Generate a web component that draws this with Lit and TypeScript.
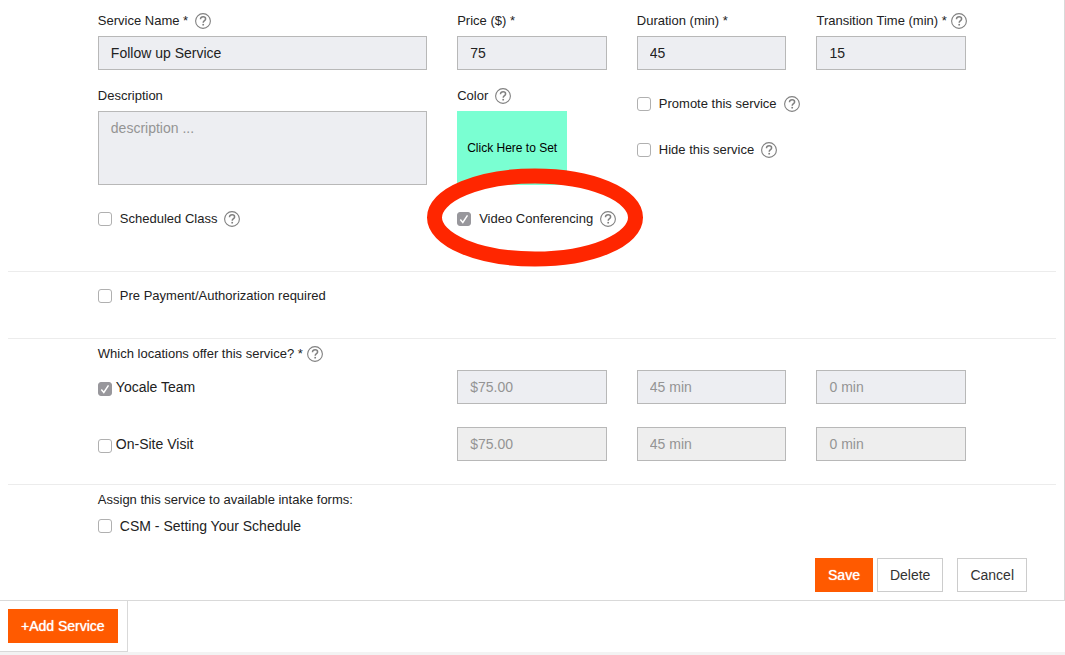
import { LitElement, html, css } from "lit";
import { customElement, property } from "lit/decorators.js";

@customElement("help-icon")
class HelpIcon extends LitElement {
  @property() topic = "";

  static styles = css`
    :host {
      display: inline-flex;
      flex: none;
    }
    .help {
      display: flex;
      padding: 0;
      border: 0;
      background: none;
      cursor: pointer;
    }
    .glyph {
      display: block;
      width: 16px;
      height: 16px;
    }
  `;

  render() {
    return html`<button class="help" type="button" aria-label="Help: ${this.topic}">
      <svg class="glyph" viewBox="0 0 16 16" fill="none" stroke="#808080" aria-hidden="true">
        <circle cx="8" cy="8" r="7.4" stroke-width="1.1" />
        <path d="M5.5 6.3C5.5 4.6 6.5 3.8 8.1 3.8C9.6 3.8 10.6 4.6 10.6 5.9C10.6 7.7 8.2 7.6 8.2 9.8" stroke-width="1.5" />
        <path d="M8.2 10.9V12.5" stroke-width="1.7" />
      </svg>
    </button>`;
  }
}

@customElement("app-root")
class AppRoot extends LitElement {
  static styles = css`
    :host {
      display: block;
      min-height: 100vh;
      background: #f3f3f3;
      color: #222;
      font-family: "Liberation Sans", Arial, sans-serif;
      font-size: 13px;
      line-height: 20px;
    }
    * {
      box-sizing: border-box;
    }
    .page {
      background: #fff;
    }
    .panel {
      padding: 11px 8px 8px;
      border-right: 1px solid #d9d9d9;
      border-bottom: 1px solid #d9d9d9;
    }
    .row {
      display: grid;
      grid-template-columns: repeat(12, minmax(0, 1fr));
      column-gap: 30px;
    }
    .first {
      grid-column: 2 / span 4;
    }
    .wide {
      grid-column: 2 / span 10;
    }
    .second {
      grid-column: 6 / span 2;
    }
    .third {
      grid-column: 8 / span 2;
    }
    .fourth {
      grid-column: 10 / span 2;
    }
    .details {
      margin-top: 16px;
    }
    .options {
      margin-top: 24px;
      padding-bottom: 42px;
    }
    .section {
      border-top: 1px solid #ececec;
    }
    .payment {
      padding: 14px 0 32px;
    }
    .locations {
      row-gap: 23px;
      padding: 5px 0 23px;
    }
    .question {
      margin-bottom: -17px;
    }
    .forms {
      row-gap: 6px;
      padding: 5px 0 22px;
    }
    .caption {
      display: flex;
      align-items: center;
      gap: 7px;
      margin-bottom: 5px;
      white-space: nowrap;
    }
    .question .caption {
      gap: 4px;
      margin-bottom: 0;
    }
    .fourth .caption {
      gap: 4px;
    }
    .field {
      display: block;
      width: 100%;
      height: 34px;
      margin: 0;
      padding: 6px 12px;
      border: 1px solid #b8b8b8;
      border-radius: 0;
      background: #edeef2;
      color: #222;
      font: inherit;
      font-size: 14px;
    }
    .field::placeholder {
      color: #949494;
      opacity: 1;
    }
    .field:disabled {
      background: #eee;
    }
    .area {
      height: 74px;
      resize: none;
    }
    .swatch {
      display: block;
      height: 74px;
      padding: 0 10px;
      border: 0;
      background: #7affd2;
      color: #000;
      font: inherit;
      font-size: 12px;
      white-space: nowrap;
    }
    .check {
      display: flex;
      align-items: center;
      gap: 7px;
      white-space: nowrap;
    }
    .toggle {
      display: flex;
      align-items: center;
      gap: 8px;
    }
    .large {
      font-size: 14px;
    }
    .place {
      gap: 4px;
      height: 34px;
    }
    .box {
      flex: none;
      width: 14px;
      height: 14px;
      margin: 0;
      appearance: none;
      border: 1px solid #b0b0b0;
      border-radius: 3px;
      background: #fff;
    }
    .place .box {
      margin-top: 4px;
    }
    .box:checked {
      border-color: #98979c;
      background: #98979c
        url("data:image/svg+xml,%3Csvg xmlns='http://www.w3.org/2000/svg' viewBox='0 0 12 12'%3E%3Cpath d='M2.3 6.6L4.8 9.4L9.5 2.3' fill='none' stroke='white' stroke-width='1.5'/%3E%3C/svg%3E")
        center / 12px 12px no-repeat;
    }
    .visibility {
      display: flex;
      flex-direction: column;
      gap: 26px;
      padding-top: 8px;
    }
    .marked {
      position: relative;
    }
    .ring {
      position: absolute;
      top: -41px;
      left: -30px;
      width: 216px;
      height: 99px;
      pointer-events: none;
    }
    .actions {
      display: flex;
      justify-content: flex-end;
      padding-right: 29px;
    }
    .button {
      height: 34px;
      padding: 0 12px;
      border: 1px solid #ccc;
      background: #fff;
      color: #333;
      font: inherit;
      font-size: 14px;
      white-space: nowrap;
    }
    .primary {
      border-color: #ff5a00;
      background: #ff5a00;
      color: #fff;
      text-shadow: 0 0 1px #fff;
    }
    .delete {
      margin: 0 14px 0 4px;
    }
    .add {
      display: flex;
      width: fit-content;
      padding: 8px 9px 8px 8px;
      border-right: 1px solid #d9d9d9;
      border-bottom: 1px solid #d9d9d9;
    }
  `;

  private check(id: string, text: string, help = false, checked = false) {
    return html`<div class="check">
      <label class="toggle" for=${id}>
        <input class="box" type="checkbox" id=${id} ?checked=${checked} />${text}
      </label>
      ${help ? html`<help-icon topic=${text}></help-icon>` : ""}
    </div>`;
  }

  private input(column: string, id: string, text: string, value: string, help = false) {
    return html`<div class=${column}>
      <div class="caption">
        <label for=${id}>${text} *</label>
        ${help ? html`<help-icon topic=${text}></help-icon>` : ""}
      </div>
      <input class="field" id=${id} .value=${value} />
    </div>`;
  }

  private location(id: string, name: string, offered: boolean) {
    const fields = [
      ["second", "price", "$75.00"],
      ["third", "duration", "45 min"],
      ["fourth", "transition time", "0 min"],
    ];
    return html`
      <div class="first">
        <label class="toggle place large" for=${id}>
          <input class="box" type="checkbox" id=${id} ?checked=${offered} />${name}
        </label>
      </div>
      ${fields.map(
        ([column, label, hint]) => html`<div class=${column}>
          <input class="field" aria-label="${name} ${label}" placeholder=${hint} ?disabled=${!offered} />
        </div>`
      )}
    `;
  }

  render() {
    return html`<main class="page">
      <form class="panel" @submit=${(e: Event) => e.preventDefault()}>
        <div class="row">
          ${this.input("first", "name", "Service Name", "Follow up Service", true)}
          ${this.input("second", "price", "Price ($)", "75")}
          ${this.input("third", "duration", "Duration (min)", "45")}
          ${this.input("fourth", "transition", "Transition Time (min)", "15", true)}
        </div>
        <div class="row details">
          <div class="first">
            <div class="caption"><label for="description">Description</label></div>
            <textarea class="field area" id="description" placeholder="description ..."></textarea>
          </div>
          <div class="second">
            <div class="caption">
              <label for="color">Color</label><help-icon topic="Color"></help-icon>
            </div>
            <button class="swatch" type="button" id="color">Click Here to Set</button>
          </div>
          <div class="third visibility">
            ${this.check("promote", "Promote this service", true)}
            ${this.check("hide", "Hide this service", true)}
          </div>
        </div>
        <div class="row options">
          <div class="first">${this.check("class", "Scheduled Class", true)}</div>
          <div class="second marked">
            ${this.check("video", "Video Conferencing", true, true)}
            <svg class="ring" viewBox="0 0 216 99" aria-hidden="true">
              <ellipse cx="108" cy="49.5" rx="100.5" ry="41.5" fill="none" stroke="#ff2600" stroke-width="15" />
            </svg>
          </div>
        </div>
        <div class="row section payment">
          <div class="wide">${this.check("prepay", "Pre Payment/Authorization required")}</div>
        </div>
        <div class="row section locations">
          <div class="wide question">
            <div class="caption">
              <span>Which locations offer this service? *</span>
              <help-icon topic="Locations"></help-icon>
            </div>
          </div>
          ${this.location("team", "Yocale Team", true)}
          ${this.location("onsite", "On-Site Visit", false)}
        </div>
        <div class="row section forms">
          <div class="wide">Assign this service to available intake forms:</div>
          <div class="wide large">${this.check("csm", "CSM - Setting Your Schedule")}</div>
        </div>
        <div class="actions">
          <button class="button primary" type="submit">Save</button>
          <button class="button delete" type="button">Delete</button>
          <button class="button" type="button">Cancel</button>
        </div>
      </form>
      <div class="add">
        <button class="button primary" type="button">+Add Service</button>
      </div>
    </main>`;
  }
}
